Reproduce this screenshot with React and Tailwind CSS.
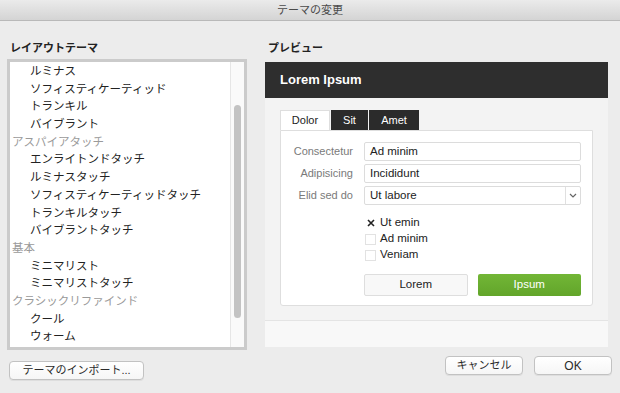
import { Check } from 'lucide-react'

const themes = [
  { label: 'ルミナス' },
  { label: 'ソフィスティケーティッド' },
  { label: 'トランキル' },
  { label: 'バイブラント' },
  { label: 'アスパイアタッチ', header: true },
  { label: 'エンライトンドタッチ' },
  { label: 'ルミナスタッチ' },
  { label: 'ソフィスティケーティッドタッチ' },
  { label: 'トランキルタッチ' },
  { label: 'バイブラントタッチ' },
  { label: '基本', header: true },
  { label: 'ミニマリスト' },
  { label: 'ミニマリストタッチ' },
  { label: 'クラシックリファインド', header: true },
  { label: 'クール' },
  { label: 'ウォーム' },
]

const fields = [
  { label: 'Consectetur', value: 'Ad minim' },
  { label: 'Adipisicing', value: 'Incididunt' },
]

const checks = [
  { label: 'Ut emin', checked: true },
  { label: 'Ad minim', checked: false },
  { label: 'Veniam', checked: false },
]

function MacButton({ children, className = '' }) {
  return (
    <button className={`h-[19px] rounded-[4px] border border-[#c2c2c2] bg-gradient-to-b from-white to-[#f6f6f6] text-[11px] leading-none text-[#2a2a2a] shadow-[0_1px_0_rgba(0,0,0,0.06)] ${className}`}>
      {children}
    </button>
  )
}

export default function App() {
  return (
    <div className="w-[620px] h-[393px] overflow-hidden bg-[#ececec] font-['Liberation_Sans','Noto_Sans_CJK_JP',sans-serif]">
      {/* Title bar */}
      <div className="h-[21px] flex items-center justify-center bg-gradient-to-b from-[#ebebeb] to-[#d4d4d4] border-b border-[#b9b9b9] text-[11px] text-[#4a4a4a]">
        テーマの変更
      </div>

      <div className="flex pt-[19px]">
        {/* Left: theme list */}
        <div className="ml-[7px] w-[240px] flex flex-col">
          <div className="h-[16px] leading-[16px] pl-[3px] text-[11px] font-bold text-[#222]">レイアウトテーマ</div>
          <div className="mt-[3px] h-[291px] flex border-[3px] border-[#cbcbcb] bg-white">
            <div className="flex-1 pt-[1px]">
              {themes.map((t, i) => (
                <div key={i}
                  className={`h-[17.7px] leading-[17.7px] text-[11.5px] whitespace-nowrap ${t.header ? 'pl-[2px] text-[#9a9a9a]' : 'pl-[20px] text-[#222]'}`}>
                  {t.label}
                </div>
              ))}
            </div>
            <div className="w-[14px] border-l border-[#e6e6e6] bg-[#fafafa] flex justify-center">
              <div className="mt-[43px] w-[7px] h-[213px] rounded-full bg-[#c3c3c3]" />
            </div>
          </div>
          <MacButton className="mt-[11px] ml-[2px] w-[135px] h-[18px]">テーマのインポート...</MacButton>
        </div>

        {/* Right: preview */}
        <div className="ml-[18px] w-[343px] flex flex-col">
          <div className="h-[16px] leading-[16px] pl-[3px] text-[11px] font-bold text-[#222]">プレビュー</div>
          <div className="mt-[6px] h-[36px] flex items-center pl-[15px] bg-[#2e2e2e] text-white text-[13px] font-bold">
            Lorem Ipsum
          </div>

          <div className="h-[222px] bg-[#f3f3f3] pt-[12px] px-[15px]">
            {/* Tabs */}
            <div className="flex h-[20px] text-[11px]">
              <div className="w-[50px] flex items-center justify-center bg-white text-[#222] border-t border-x border-[#dedede]">Dolor</div>
              <div className="ml-[1px] w-[37px] flex items-center justify-center bg-[#2b2b2b] text-white">Sit</div>
              <div className="ml-[1px] w-[50px] flex items-center justify-center bg-[#2b2b2b] text-white">Amet</div>
            </div>

            {/* Card */}
            <div className="h-[176px] bg-white border border-[#dedede] rounded-b-[3px] pt-[11px] pr-[11px]">
              {fields.map((f, i) => (
                <div key={i} className="flex items-center mb-[3px]">
                  <div className="w-[72px] text-right text-[11px] text-[#7a7a7a]">{f.label}</div>
                  <div className="ml-[11px] flex-1 h-[19px] flex items-center pl-[5px] border border-[#dcdcdc] rounded-[2px] text-[11.5px] text-[#222]">
                    {f.value}
                  </div>
                </div>
              ))}
              <div className="flex items-center">
                <div className="w-[72px] text-right text-[11px] text-[#7a7a7a]">Elid sed do</div>
                <div className="ml-[11px] flex-1 h-[19px] flex items-center border border-[#dcdcdc] rounded-[2px] text-[11.5px] text-[#222]">
                  <span className="flex-1 pl-[5px]">Ut labore</span>
                  <div className="w-[15px] h-full flex items-center justify-center border-l border-[#e0e0e0]">
                    <svg width="8" height="5" viewBox="0 0 8 5" fill="none">
                      <path d="M1 1l3 3 3-3" stroke="#666" strokeWidth="1.2" />
                    </svg>
                  </div>
                </div>
              </div>

              <div className="mt-[10px] ml-[84px] flex flex-col">
                {checks.map((c, i) => (
                  <div key={i} className="h-[16px] flex items-center gap-[4px] text-[11.5px] text-[#222]">
                    {c.checked ? (
                      <div className="w-[11px] h-[11px] flex items-center justify-center">
                        <svg width="8" height="8" viewBox="0 0 8 8">
                          <path d="M1 1l6 6M7 1L1 7" stroke="#222" strokeWidth="1.6" />
                        </svg>
                      </div>
                    ) : (
                      <div className="w-[11px] h-[11px] border border-[#e2e2e2] bg-white" />
                    )}
                    {c.label}
                  </div>
                ))}
              </div>

              <div className="mt-[11px] ml-[83px] grid grid-cols-2 gap-[10px]">
                <button className="h-[22px] rounded-[2px] border border-[#dedede] bg-[#f8f8f8] text-[11.5px] text-[#222]">Lorem</button>
                <button className="h-[22px] rounded-[2px] bg-gradient-to-b from-[#72b636] to-[#62a52a] text-[11.5px] text-white">Ipsum</button>
              </div>
            </div>
          </div>

          <div className="h-[27px] bg-[#f8f8f8] border-t border-[#e4e4e4]" />

          <div className="mt-[9px] -mr-[4px] flex justify-end gap-[11px]">
            <MacButton className="w-[78px]">キャンセル</MacButton>
            <MacButton className="w-[78px] text-[12px]">OK</MacButton>
          </div>
        </div>
      </div>
    </div>
  )
}
